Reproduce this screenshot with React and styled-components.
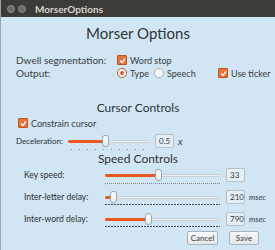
import React from 'react';
import styled, { createGlobalStyle } from 'styled-components';

const GlobalStyle = createGlobalStyle`
  body {
    margin: 0;
    font-family: Lato, "Liberation Sans", sans-serif;
    background: #d0e6f4;
  }
`;

const Window = styled.div`
  width: 275px;
  height: 250px;
  overflow: hidden;
  background: #d0e6f4;
  color: #3a3a3a;
  border-left: 1px solid #9aa7b0;
  box-sizing: border-box;
`;

const TitleBar = styled.div`
  height: 17px;
  background: #3c3b37;
  display: flex;
  align-items: center;
  padding-left: 6px;
  gap: 3px;
`;

const WinButton = styled.span`
  width: 6px;
  height: 6px;
  border-radius: 50%;
  background: #6f6d68;
  border: 1px solid #8a8883;
`;

const TitleText = styled.span`
  margin-left: 6px;
  font-size: 10px;
  font-weight: bold;
  color: #d8d4cb;
`;

const Body = styled.div`
  padding: 0 0 0 15px;
`;

const Heading = styled.div`
  text-align: center;
  font-size: 15px;
  height: 18px;
  line-height: 18px;
  margin: 7px 0 0 -15px;
  color: #333;
`;

const OptionGrid = styled.div`
  display: grid;
  grid-template-columns: 101px 37px 64px auto;
  grid-auto-rows: 12px;
  row-gap: 1px;
  margin-top: 12px;
  align-items: center;
`;

const BigLabel = styled.div`
  font-size: 10px;
`;

const Option = styled.label`
  display: flex;
  align-items: center;
  gap: 3px;
  font-size: 9px;
  white-space: nowrap;
`;

const Check = styled.span`
  width: 8px;
  height: 8px;
  border-radius: 1px;
  border: 1px solid #c4501e;
  background: #e8743c;
  display: flex;
  align-items: center;
  justify-content: center;
  flex-shrink: 0;
`;

const Radio = styled.span`
  width: 8px;
  height: 8px;
  border-radius: 50%;
  border: 1px solid ${p => (p.on ? '#c4501e' : '#a9b3ba')};
  background: ${p => (p.on ? '#fff' : '#f6f8f9')};
  display: flex;
  align-items: center;
  justify-content: center;
  flex-shrink: 0;
  &::after {
    content: '';
    width: 4px;
    height: 4px;
    border-radius: 50%;
    background: ${p => (p.on ? '#e8582a' : 'transparent')};
  }
`;

const SectionTitle = styled.div`
  text-align: center;
  font-size: 12px;
  height: 14px;
  line-height: 14px;
  margin: ${p => p.top}px 0 0 -15px;
  color: #333;
`;

const CheckRow = styled.div`
  margin: 3px 0 0 2px;
  height: 10px;
  display: flex;
  align-items: center;
`;

const SliderRow = styled.div`
  display: grid;
  grid-template-columns: ${p => p.cols};
  align-items: start;
  margin-top: ${p => p.top}px;
`;

const SmallLabel = styled.div`
  font-size: ${p => p.size || 8}px;
  height: 12px;
  line-height: 12px;
  color: #2e2e2e;
  padding-left: ${p => p.indent || 0}px;
  white-space: nowrap;
`;

const SliderBox = styled.div`
  display: flex;
  flex-direction: column;
`;

const Track = styled.div`
  position: relative;
  height: 12px;
  display: flex;
  align-items: center;
`;

const Rail = styled.div`
  width: 100%;
  height: 3px;
  border-radius: 2px;
  background: #eef0f1;
  border: 1px solid #c9cfd3;
  box-sizing: border-box;
`;

const Fill = styled.div`
  position: absolute;
  left: 0;
  height: 3px;
  background: #e9581f;
  border-radius: 2px;
`;

const Knob = styled.div`
  position: absolute;
  width: 5px;
  height: 10px;
  margin-left: -3px;
  border-radius: 3px;
  background: linear-gradient(#ffffff, #e9ebec);
  border: 1px solid #9ea5aa;
`;

const Ticks = styled.div`
  height: 1px;
  margin-top: ${p => p.gap}px;
  background: ${p => p.kind === 'dots'
    ? 'repeating-linear-gradient(90deg, #8d979e 0 1px, transparent 1px 8px)'
    : p.kind === 'fine'
      ? 'repeating-linear-gradient(90deg, #7f8a92 0 1px, transparent 1px 2px)'
      : 'repeating-linear-gradient(90deg, #3a4a5a 0 2px, transparent 2px 3px)'};
  margin-left: ${p => (p.kind === 'dots' ? 3 : 0)}px;
  margin-right: ${p => (p.kind === 'dots' ? 3 : 0)}px;
`;

const NumBox = styled.div`
  height: 12px;
  border: 1px solid #b7c0c6;
  border-radius: 2px;
  background: #e4eff6;
  font-size: 8px;
  line-height: 12px;
  padding-left: 3px;
  box-sizing: content-box;
  margin-top: -1px;
`;

const Unit = styled.div`
  font-size: ${p => p.size}px;
  font-style: italic;
  line-height: 12px;
  padding-left: 4px;
`;

const ButtonRow = styled.div`
  display: flex;
  justify-content: flex-end;
  gap: 11px;
  margin: 4px 16px 0 0;
`;

const Button = styled.button`
  width: ${p => p.w}px;
  height: 14px;
  padding: 0;
  font-family: inherit;
  font-size: 8px;
  color: #3a3a3a;
  border: 1px solid #aab3b9;
  border-radius: 2px;
  background: linear-gradient(#f7f9fa, #e2e7ea);
`;

function CheckMark() {
  return (
    <svg width="7" height="7" viewBox="0 0 7 7">
      <path d="M1 3.5 L3 5.5 L6 1.5" fill="none" stroke="#fff" strokeWidth="1.3" />
    </svg>
  );
}

function Slider({ value, ticks, gap }) {
  return (
    <SliderBox>
      <Track>
        <Rail />
        <Fill style={{ width: `${value}%` }} />
        <Knob style={{ left: `${value}%` }} />
      </Track>
      <Ticks kind={ticks} gap={gap} />
    </SliderBox>
  );
}

const speedCols = '89px 115px 6px 19px auto';

export default function App() {
  return (
    <Window>
      <GlobalStyle />
      <TitleBar>
        <WinButton />
        <WinButton />
        <TitleText>MorserOptions</TitleText>
      </TitleBar>
      <Body>
        <Heading>Morser Options</Heading>
        <OptionGrid>
          <BigLabel>Dwell segmentation:</BigLabel>
          <Option><Check><CheckMark /></Check>Word stop</Option>
          <span />
          <span />
          <BigLabel>Output:</BigLabel>
          <Option><Radio on />Type</Option>
          <Option><Radio />Speech</Option>
          <Option><Check><CheckMark /></Check>Use ticker</Option>
        </OptionGrid>

        <SectionTitle top={22}>Cursor Controls</SectionTitle>
        <CheckRow>
          <Option><Check><CheckMark /></Check>Constrain cursor</Option>
        </CheckRow>
        <SliderRow cols="52px 82px 5px 19px auto" top={7}>
          <SmallLabel>Deceleration:</SmallLabel>
          <Slider value={45} ticks="dots" gap={2} />
          <span />
          <NumBox>0.5</NumBox>
          <Unit size={10}>x</Unit>
        </SliderRow>

        <SectionTitle top={2}>Speed Controls</SectionTitle>
        <SliderRow cols={speedCols} top={3}>
          <SmallLabel indent={8} size={8.5}>Key speed:</SmallLabel>
          <Slider value={46} ticks="fine" gap={2} />
          <span />
          <NumBox>33</NumBox>
          <span />
        </SliderRow>
        <SliderRow cols={speedCols} top={7}>
          <SmallLabel indent={8} size={8.5}>Inter-letter delay:</SmallLabel>
          <Slider value={7} ticks="dash" gap={1} />
          <span />
          <NumBox>210</NumBox>
          <Unit size={8}>msec</Unit>
        </SliderRow>
        <SliderRow cols={speedCols} top={8}>
          <SmallLabel indent={8} size={8.5}>Inter-word delay:</SmallLabel>
          <Slider value={37} ticks="dash" gap={1} />
          <span />
          <NumBox>790</NumBox>
          <Unit size={8}>msec</Unit>
        </SliderRow>
        <ButtonRow>
          <Button w={31}>Cancel</Button>
          <Button w={30}>Save</Button>
        </ButtonRow>
      </Body>
    </Window>
  );
}
